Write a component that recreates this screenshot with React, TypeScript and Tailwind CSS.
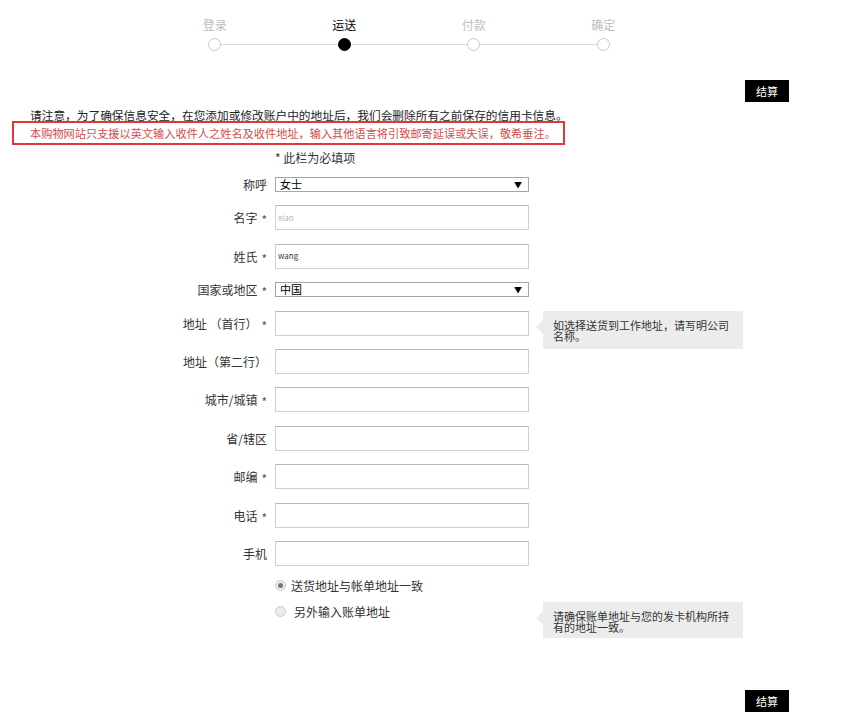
import type { ReactNode } from "react";

const steps = [
  { label: "登录", active: false },
  { label: "运送", active: true },
  { label: "付款", active: false },
  { label: "确定", active: false },
];

function Stepper() {
  return (
    <div className="relative ml-[150px] w-[518px] pt-[17px]">
      <div className="absolute left-[64px] right-[64px] top-[44px] h-px bg-[#dcdcdc]" />
      <div className="grid grid-cols-4">
        {steps.map((s) => (
          <div key={s.label} className="flex flex-col items-center">
            <span className={`h-[16px] leading-[16px] text-[12px] ${s.active ? "text-black" : "text-[#bdbdbd]"}`}>
              {s.label}
            </span>
            <span
              className={`relative mt-[5px] h-[13px] w-[13px] rounded-full border ${
                s.active ? "border-black bg-black" : "border-[#c8c8c8] bg-white"
              }`}
            />
          </div>
        ))}
      </div>
    </div>
  );
}

function CheckoutButton() {
  return (
    <div className="flex justify-end pr-[71px]">
      <button className="h-[22px] w-[44px] bg-black text-[11px] leading-[22px] text-white">结算</button>
    </div>
  );
}

function Tip({ children, className }: { children: ReactNode; className: string }) {
  return (
    <div className={`absolute left-[543px] w-[200px] bg-[#ececec] pl-[10px] pr-[12px] text-[11px] leading-[11px] text-[#333] ${className}`}>
      <span className="absolute left-[-7px] top-[9px] h-0 w-0 border-y-[7px] border-r-[7px] border-y-transparent border-r-[#ececec]" />
      {children}
    </div>
  );
}

function Row({ label, req, children, tip }: { label: string; req?: boolean; children: ReactNode; tip?: ReactNode }) {
  return (
    <div className="relative flex items-center">
      <div className="w-[268px] pr-[1px] text-right text-[12px] leading-[15px] text-[#333]">
        {label}
        {req && <span className="ml-[4px] inline-block translate-y-[2px] text-[12px] leading-none text-[#555]">*</span>}
      </div>
      <div className="ml-[7px] w-[254px]">{children}</div>
      {tip}
    </div>
  );
}

function TextInput({ value, tone }: { value?: string; tone?: string }) {
  return (
    <div className="flex h-[25px] items-center overflow-hidden border border-[#cfcfcf] border-t-[#b8b8b8] bg-white pl-[2px]">
      {value && <span className={`text-[8px] leading-none ${tone}`}>{value}</span>}
    </div>
  );
}

function Select({ value }: { value: string }) {
  return (
    <div className="flex h-[15px] items-center justify-between border border-[#a5a5a5] bg-white pl-[4px] pr-[6px]">
      <span className="text-[11px] leading-none text-black">{value}</span>
      <span className="text-[8px] leading-none text-black">▼</span>
    </div>
  );
}

function Radio({ checked, label }: { checked?: boolean; label: string }) {
  return (
    <div className="flex h-[14px] items-center pl-[275px] text-[12px] text-[#333]">
      <span className="flex h-[11px] w-[11px] items-center justify-center rounded-full border border-[#c9c9c9] bg-[#ececec]">
        {checked && <span className="h-[5px] w-[5px] rounded-full bg-[#777]" />}
      </span>
      <span className={checked ? "ml-[5px]" : "ml-[8px]"}>{label}</span>
    </div>
  );
}

export default function App() {
  return (
    <div className="h-[717px] w-[860px] overflow-hidden bg-white text-[12px] text-[#333]" style={{ fontFamily: '"Noto Sans CJK SC", "Noto Sans", sans-serif' }}>
      <Stepper />
      <div className="mt-[29px]">
        <CheckoutButton />
      </div>
      <p className="mt-[7px] whitespace-nowrap pl-[30px] leading-[12px] text-[11.7px] text-[#222]">
        请注意，为了确保信息安全，在您添加或修改账户中的地址后，我们会删除所有之前保存的信用卡信息。
      </p>
      <div className="ml-[12px] flex h-[24px] w-[553px] items-center border-2 border-[#e2363b] pb-[1px] pl-[16px]">
        <span className="whitespace-nowrap text-[11.2px] leading-[14px] text-[#d24b4b]">
          本购物网站只支援以英文输入收件人之姓名及收件地址，输入其他语言将引致邮寄延误或失误，敬希垂注。
        </span>
      </div>
      <p className="mt-[5px] pl-[275px] leading-[16px] text-[12px] text-[#333]">* 此栏为必填项</p>

      <div className="mt-[11px] flex flex-col gap-[13.4px]">
        <Row label="称呼">
          <Select value="女士" />
        </Row>
        <Row label="名字" req>
          <TextInput value="xiao" tone="text-[#b5b5b5]" />
        </Row>
        <Row label="姓氏" req>
          <TextInput value="wang" tone="text-[#333]" />
        </Row>
        <Row label="国家或地区" req>
          <Select value="中国" />
        </Row>
        <Row
          label="地址 （首行）"
          req
          tip={
            <Tip className="top-0 h-[38px] pt-[9px]">
              如选择送货到工作地址，请写明公司名称。
            </Tip>
          }
        >
          <TextInput />
        </Row>
        <Row label="地址（第二行）">
          <TextInput />
        </Row>
        <Row label="城市/城镇" req>
          <TextInput />
        </Row>
        <Row label="省/辖区">
          <TextInput />
        </Row>
        <Row label="邮编" req>
          <TextInput />
        </Row>
        <Row label="电话" req>
          <TextInput />
        </Row>
        <Row label="手机">
          <TextInput />
        </Row>
      </div>

      <div className="mt-[13px] flex flex-col gap-[12px]">
        <Radio checked label="送货地址与帐单地址一致" />
        <div className="relative">
          <Radio label="另外输入账单地址" />
          <Tip className="top-[-3px] h-[36px] pt-[9px]">
            请确保账单地址与您的发卡机构所持有的地址一致。
          </Tip>
        </div>
      </div>

      <div className="mt-[71px]">
        <CheckoutButton />
      </div>
    </div>
  );
}
